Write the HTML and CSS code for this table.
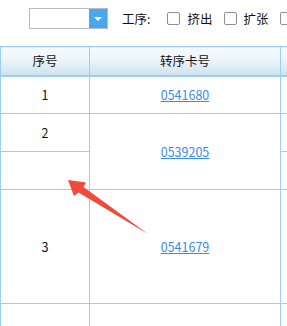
FILE: index.html
```html
<!DOCTYPE html>
<html lang="zh-CN">
<head>
<meta charset="utf-8">
<title>转序卡</title>
<link rel="stylesheet" href="styles.css">
</head>
<body>
<div class="page">
  <div class="toolbar">
    <div class="combo">
      <span class="combo-field"></span>
      <span class="combo-btn"><span class="caret"></span></span>
    </div>
    <span class="label">工序:</span>
    <label class="check"><span class="box"></span><span>挤出</span></label>
    <label class="check"><span class="box"></span><span>扩张</span></label>
    <label class="check"><span class="box"></span></label>
  </div>

  <table class="grid">
    <colgroup>
      <col class="c-seq">
      <col class="c-card">
      <col class="c-more">
    </colgroup>
    <thead>
      <tr class="r-head">
        <th>序号</th>
        <th>转序卡号</th>
        <th></th>
      </tr>
    </thead>
    <tbody>
      <tr class="r-std">
        <td>1</td>
        <td><a href="#">0541680</a></td>
        <td></td>
      </tr>
      <tr class="r-std">
        <td>2</td>
        <td rowspan="2"><a href="#">0539205</a></td>
        <td></td>
      </tr>
      <tr class="r-std">
        <td></td>
        <td></td>
      </tr>
      <tr class="r-tall">
        <td>3</td>
        <td><a href="#">0541679</a></td>
        <td></td>
      </tr>
      <tr class="r-std">
        <td></td>
        <td></td>
        <td></td>
      </tr>
    </tbody>
  </table>

  <svg class="pointer" width="287" height="326" viewBox="0 0 287 326">
    <polygon points="68,180 86,182.5 83.5,187 148,234 78.5,192.5 74,196" fill="#ef4a3c"/>
  </svg>
</div>
</body>
</html>
```

FILE: styles.css
```css
html, body {
  margin: 0;
  padding: 0;
  background: #fff;
  overflow: hidden;
}

body {
  font-family: "Noto Sans CJK SC", "Noto Sans", sans-serif;
  font-size: 12px;
  color: #111;
}

.page {
  position: relative;
  width: 287px;
  height: 326px;
  overflow: hidden;
}

/* filter bar above the grid */
.toolbar {
  display: flex;
  align-items: center;
  width: max-content;
  height: 21px;
  padding: 8px 0 0 29px;
  margin-bottom: 17px;
  white-space: nowrap;
}

.toolbar > * {
  flex-shrink: 0;
}

.combo {
  display: flex;
  width: 79px;
  height: 21px;
  box-sizing: border-box;
  border: 1px solid #b9b9c9;
}

.combo-field {
  flex: 1;
  background: #fff;
}

.combo-btn {
  width: 18px;
  background: #4aa7ec;
  display: flex;
  align-items: center;
  justify-content: center;
}

.caret {
  width: 0;
  height: 0;
  border-left: 4px solid transparent;
  border-right: 4px solid transparent;
  border-top: 4px solid #fff;
  margin-top: 1px;
}

.label {
  margin-left: 14px;
  margin-right: 17px;
  font-size: 12.5px;
}

.check {
  display: flex;
  align-items: center;
  margin-right: 11px;
  font-size: 12.5px;
}

.box {
  width: 11px;
  height: 11px;
  border: 1px solid #8e8f8f;
  border-radius: 2px;
  background: #fff;
  margin-right: 7px;
}

/* data grid */
.grid {
  border-collapse: collapse;
  table-layout: fixed;
  width: 400px;
}

.c-seq { width: 89px; }
.c-card { width: 191px; }
.c-more { width: 120px; }

.grid th,
.grid td {
  border: 1px solid #9fcdf7;
  padding: 0;
  text-align: center;
  vertical-align: middle;
  font-weight: normal;
  font-size: 12.5px;
}

.grid th {
  background: linear-gradient(#f6fafd 0%, #eef5fa 40%, #cde2ee 100%);
  color: #111;
  border-bottom: 2px solid #9fcdf7;
}

.r-head { height: 29px; }
.r-std { height: 38px; }
.r-tall { height: 114px; }

.grid a {
  color: #3a8ce6;
  text-decoration: underline;
}

/* annotation arrow laid over the grid */
.pointer {
  position: absolute;
  left: 0;
  top: 0;
  pointer-events: none;
}
```
